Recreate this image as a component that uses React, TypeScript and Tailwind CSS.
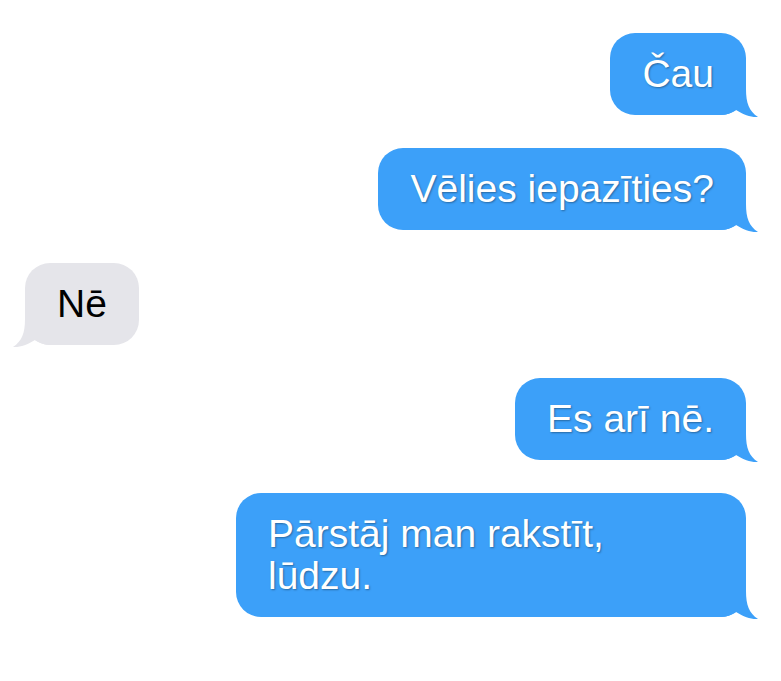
type Msg = { text: string; mine: boolean };

const messages: Msg[] = [
  { text: "Čau", mine: true },
  { text: "Vēlies iepazīties?", mine: true },
  { text: "Nē", mine: false },
  { text: "Es arī nē.", mine: true },
  { text: "Pārstāj man rakstīt, lūdzu.", mine: true },
];

const Tail = ({ mine }: { mine: boolean }) => (
  <svg
    width="40"
    height="34"
    viewBox="0 0 40 34"
    className={
      mine
        ? "absolute -right-[14px] -bottom-[4px] fill-[#3ca0f9]"
        : "absolute -left-[14px] -bottom-[4px] -scale-x-100 fill-[#e5e5ea]"
    }
  >
    <path d="M0 0H26V4C26 18 29 26 38 32C31 32.5 24 30 16 25C12 28 6 30 0 30Z" />
  </svg>
);

const Bubble = ({ msg }: { msg: Msg }) => (
  <div
    className={
      msg.mine
        ? "relative self-end max-w-[510px] rounded-[25px] bg-[#3ca0f9] px-8 py-5 text-white [text-shadow:1px_1px_2px_rgba(0,0,0,0.35)]"
        : "relative self-start rounded-[25px] bg-[#e5e5ea] px-8 py-5 text-black"
    }
  >
    <Tail mine={msg.mine} />
    <p className="relative">{msg.text}</p>
  </div>
);

export default function App() {
  return (
    <div className="min-h-screen bg-white">
      <div className="flex flex-col gap-[33px] pt-[33px] pl-[25px] pr-[35px] font-['Liberation_Sans',Arial,sans-serif] text-[39px] leading-[42px]">
        {messages.map((m, i) => (
          <Bubble key={i} msg={m} />
        ))}
      </div>
    </div>
  );
}
